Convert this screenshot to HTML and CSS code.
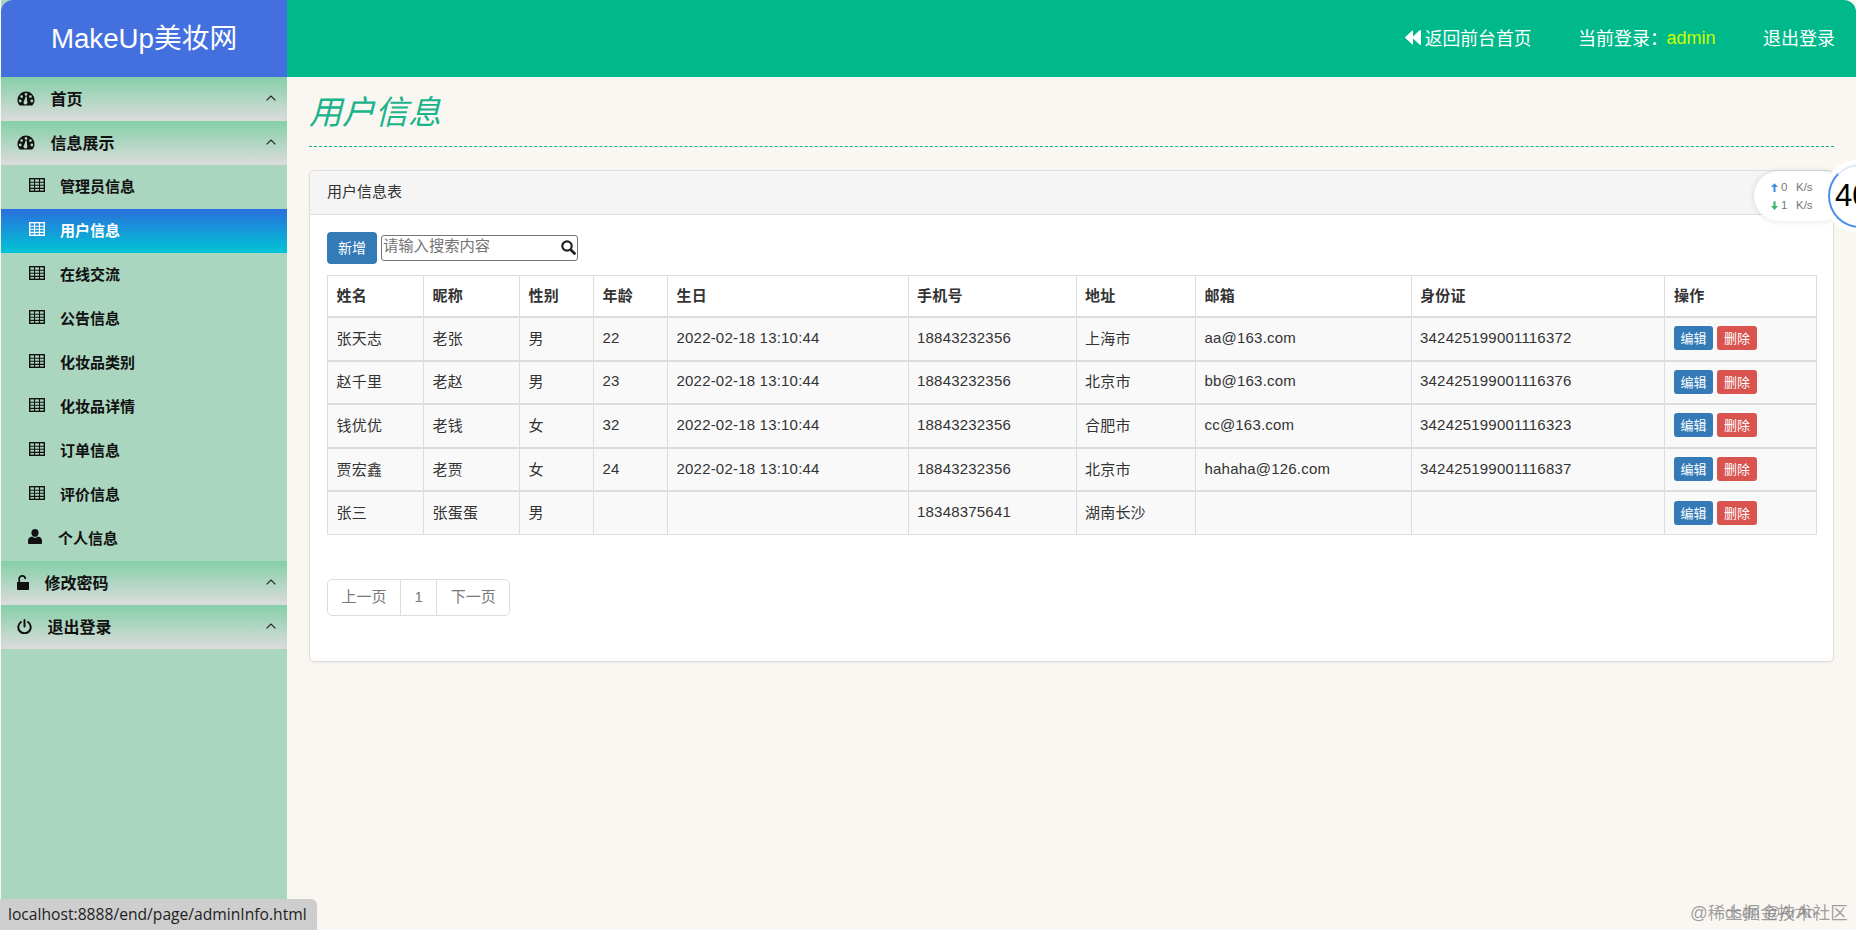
FILE: index.html
```html
<!DOCTYPE html>
<html lang="zh-CN">
<head>
<meta charset="UTF-8">
<meta name="viewport" content="width=device-width, initial-scale=1.0">
<title>MakeUp美妆网</title>
<link rel="stylesheet" href="styles.css">
</head>
<body>
  <!-- icon sprites -->
  <svg class="sprites" aria-hidden="true">
    <symbol id="i-dash" viewBox="0 0 17 15"><path fill="currentColor" fill-rule="evenodd" d="M8.5.5A8.5 8.5 0 0 0 0 9c0 2.3.8 4.1 2.2 5.5h12.6C16.2 13.1 17 11.3 17 9A8.5 8.5 0 0 0 8.5.5zM7.1 3.4a1.4 1.4 0 1 0 2.8 0 1.4 1.4 0 1 0-2.8 0zM2.7 5.6a1.4 1.4 0 1 0 2.8 0 1.4 1.4 0 1 0-2.8 0zM11.5 5.6a1.4 1.4 0 1 0 2.8 0 1.4 1.4 0 1 0-2.8 0zM1.3 10a1.4 1.4 0 1 0 2.8 0 1.4 1.4 0 1 0-2.8 0zM12.9 10a1.4 1.4 0 1 0 2.8 0 1.4 1.4 0 1 0-2.8 0zM8.2 5.5L6.6 10a2 2 0 1 0 3 .3L9.3 5.5z"/></symbol>
    <symbol id="i-th" viewBox="0 0 16 14"><g fill="none" stroke="currentColor"><rect x=".7" y=".7" width="14.6" height="12.6" stroke-width="1.400"/><path stroke-width="1.100" d="M.6 4.300h14.800M.6 7.300h14.800M.6 10.400h14.800M5.500.6v12.800M10.500.6v12.800"/></g></symbol>
    <symbol id="i-user" viewBox="0 0 14 15"><path fill="currentColor" d="M7 0a3.6 3.6 0 0 1 3.6 3.8C10.6 6 9.2 8 7 8S3.4 6 3.4 3.8A3.6 3.6 0 0 1 7 0zM4.2 7.6C5 8.4 6 8.9 7 8.9s2-.5 2.8-1.3c2.4.4 4.2 1.6 4.2 3.9V14c0 .6-.5 1-1 1H1c-.5 0-1-.4-1-1v-2.5c0-2.3 1.8-3.5 4.2-3.9z"/></symbol>
    <symbol id="i-lock" viewBox="0 0 12 15"><path fill="currentColor" d="M0 7h12v7c0 .6-.4 1-1 1H1c-.6 0-1-.4-1-1z"/><path fill="none" stroke="currentColor" stroke-width="1.7" d="M2.2 7V3.6C2.2 2 3.6.9 5.2.9s3 1.1 3 2.7V4"/></symbol>
    <symbol id="i-power" viewBox="0 0 15 15"><path fill="none" stroke="currentColor" stroke-width="2" stroke-linecap="round" d="M7.5 1v6.5M4 3A6.2 6.2 0 1 0 11 3"/></symbol>
    <symbol id="i-up" viewBox="0 0 10 6"><path fill="none" stroke="currentColor" stroke-width="1.2" d="M.6 5.4L5 1l4.4 4.4"/></symbol>
    <symbol id="i-back" viewBox="0 0 16 15"><path fill="currentColor" d="M8 0v6.5L15 0c.6 0 1 .4 1 1v13c0 .6-.4 1-1 1L8 8.5V15L.5 8.3c-.5-.4-.5-1.200 0-1.600z"/></symbol>
    <symbol id="i-search" viewBox="0 0 15 15"><circle cx="6" cy="6" r="4.7" fill="none" stroke="currentColor" stroke-width="2.200"/><path stroke="currentColor" stroke-width="2.800" stroke-linecap="round" d="M9.800 9.800l3.700 3.700"/></symbol>
    <symbol id="i-arrow" viewBox="0 0 8 10"><path fill="currentColor" d="M4 0l4 4.500H5.200V10H2.800V4.500H0z"/></symbol>
  </svg>

  <div class="app">
    <aside class="sidebar">
      <div class="logo">MakeUp美妆网</div>
      <nav class="menu">
        <a class="menu-group"><svg class="ic ic-dash"><use href="#i-dash"/></svg>首页<svg class="chevron"><use href="#i-up"/></svg></a>
        <a class="menu-group"><svg class="ic ic-dash"><use href="#i-dash"/></svg>信息展示<svg class="chevron"><use href="#i-up"/></svg></a>
        <a class="menu-item"><svg class="ic ic-th"><use href="#i-th"/></svg>管理员信息</a>
        <a class="menu-item active"><svg class="ic ic-th"><use href="#i-th"/></svg>用户信息</a>
        <a class="menu-item"><svg class="ic ic-th"><use href="#i-th"/></svg>在线交流</a>
        <a class="menu-item"><svg class="ic ic-th"><use href="#i-th"/></svg>公告信息</a>
        <a class="menu-item"><svg class="ic ic-th"><use href="#i-th"/></svg>化妆品类别</a>
        <a class="menu-item"><svg class="ic ic-th"><use href="#i-th"/></svg>化妆品详情</a>
        <a class="menu-item"><svg class="ic ic-th"><use href="#i-th"/></svg>订单信息</a>
        <a class="menu-item"><svg class="ic ic-th"><use href="#i-th"/></svg>评价信息</a>
        <a class="menu-item person"><svg class="ic ic-user"><use href="#i-user"/></svg>个人信息</a>
        <a class="menu-group"><svg class="ic ic-lock"><use href="#i-lock"/></svg>修改密码<svg class="chevron"><use href="#i-up"/></svg></a>
        <a class="menu-group"><svg class="ic ic-power"><use href="#i-power"/></svg>退出登录<svg class="chevron"><use href="#i-up"/></svg></a>
      </nav>
    </aside>

    <div class="right">
      <header class="topbar">
        <a class="top-link back"><svg class="ic-back"><use href="#i-back"/></svg>返回前台首页</a>
        <span class="top-link">当前登录：<b class="admin">admin</b></span>
        <a class="top-link">退出登录</a>
      </header>

      <main class="content">
        <h1 class="page-title">用户信息</h1>
        <section class="panel">
          <div class="panel-head">用户信息表</div>
          <div class="panel-body">
            <div class="toolbar">
              <button class="btn btn-add">新增</button>
              <div class="search">
                <input type="text" placeholder="请输入搜索内容">
                <svg class="ic-search"><use href="#i-search"/></svg>
              </div>
            </div>

            <table class="data-table">
              <colgroup>
                <col class="c1"><col class="c2"><col class="c3"><col class="c4"><col class="c5">
                <col class="c6"><col class="c7"><col class="c8"><col class="c9"><col class="c10">
              </colgroup>
              <thead>
                <tr><th>姓名</th><th>昵称</th><th>性别</th><th>年龄</th><th>生日</th><th>手机号</th><th>地址</th><th>邮箱</th><th>身份证</th><th>操作</th></tr>
              </thead>
              <tbody>
                <tr><td>张天志</td><td>老张</td><td>男</td><td>22</td><td>2022-02-18 13:10:44</td><td>18843232356</td><td>上海市</td><td>aa@163.com</td><td>342425199001116372</td><td><button class="btn btn-sm btn-edit">编辑</button><button class="btn btn-sm btn-del">删除</button></td></tr>
                <tr><td>赵千里</td><td>老赵</td><td>男</td><td>23</td><td>2022-02-18 13:10:44</td><td>18843232356</td><td>北京市</td><td>bb@163.com</td><td>342425199001116376</td><td><button class="btn btn-sm btn-edit">编辑</button><button class="btn btn-sm btn-del">删除</button></td></tr>
                <tr><td>钱优优</td><td>老钱</td><td>女</td><td>32</td><td>2022-02-18 13:10:44</td><td>18843232356</td><td>合肥市</td><td>cc@163.com</td><td>342425199001116323</td><td><button class="btn btn-sm btn-edit">编辑</button><button class="btn btn-sm btn-del">删除</button></td></tr>
                <tr><td>贾宏鑫</td><td>老贾</td><td>女</td><td>24</td><td>2022-02-18 13:10:44</td><td>18843232356</td><td>北京市</td><td>hahaha@126.com</td><td>342425199001116837</td><td><button class="btn btn-sm btn-edit">编辑</button><button class="btn btn-sm btn-del">删除</button></td></tr>
                <tr><td>张三</td><td>张蛋蛋</td><td>男</td><td></td><td></td><td>18348375641</td><td>湖南长沙</td><td></td><td></td><td><button class="btn btn-sm btn-edit">编辑</button><button class="btn btn-sm btn-del">删除</button></td></tr>
              </tbody>
            </table>

            <ul class="pagination">
              <li>上一页</li>
              <li>1</li>
              <li>下一页</li>
            </ul>
          </div>
        </section>
      </main>
    </div>
  </div>

  <!-- things lying over the page -->
  <div class="speed">
    <div class="speed-row"><svg class="arrow up"><use href="#i-arrow"/></svg><span class="num">0</span><span>K/s</span></div>
    <div class="speed-row"><svg class="arrow down"><use href="#i-arrow"/></svg><span class="num">1</span><span>K/s</span></div>
  </div>
  <div class="speed-ball">40</div>
  <div class="statusbar">localhost:8888/end/page/adminInfo.html</div>
  <div class="watermark">@稀土掘金技术社区</div>
  <div class="watermark second">dsdn @ArAn</div>
</body>
</html>
```

FILE: styles.css
```css
/* layout */
html, body {
  height: 100%;
}
body {
  margin: 0;
  overflow: hidden;
  position: relative;
  background-color: #faf7f3;
  color: #333;
  font-family: "Liberation Sans", "Noto Sans CJK SC", sans-serif;
  font-size: 15px;
}
.sprites {
  display: none;
}
.app {
  display: flex;
  height: 930px;
  padding-left: 1px;
  box-sizing: border-box;
  background-color: #faf7f3;
}

/* sidebar */
.sidebar {
  width: 286px;
  flex: none;
  background-color: #aad5bf;
  display: flex;
  flex-direction: column;
}
.logo {
  height: 77px;
  line-height: 77px;
  text-align: center;
  color: #fff;
  font-size: 27.700px;
  background-color: #4470df;
  border-top-left-radius: 12px;
}
.menu a {
  display: flex;
  align-items: center;
  height: 44px;
  box-sizing: border-box;
  color: #111;
  font-weight: bold;
}
.menu-group {
  position: relative;
  gap: 15.500px;
  padding-left: 16px;
  padding-bottom: 2px;
  font-size: 16px;
  background: linear-gradient(#84cfa9, #dcdcdc);
}
.menu-item {
  gap: 15px;
  padding-left: 28px;
  padding-bottom: 4px;
  font-size: 15px;
}
.menu-item.person {
  gap: 16px;
  padding-left: 27px;
}
.menu-item.active {
  color: #fff;
  background: linear-gradient(#2a6fdc, #00c5d5);
}
.ic {
  flex: none;
}
.ic-dash {
  width: 18px;
  height: 15px;
}
.ic-th {
  width: 16px;
  height: 14px;
}
.ic-user {
  width: 14px;
  height: 15px;
  margin-top: -1px;
}
.ic-lock {
  width: 12px;
  height: 15px;
}
.ic-power {
  width: 15px;
  height: 15px;
}
.chevron {
  position: absolute;
  left: 265px;
  top: 18px;
  width: 10px;
  height: 6px;
  color: #222;
}

/* top bar */
.right {
  flex: 1;
  min-width: 0;
}
.topbar {
  height: 77px;
  box-sizing: border-box;
  padding-right: 21px;
  padding-bottom: 3px;
  display: flex;
  justify-content: flex-end;
  align-items: center;
  gap: 47.500px;
  background-color: #00b98b;
  border-top-right-radius: 12px;
  color: #fff;
  font-size: 18px;
}
.top-link {
  display: flex;
  align-items: center;
}
.back {
  font-size: 17.800px;
  margin-right: -1px;
}
.ic-back {
  width: 16px;
  height: 15px;
  margin-right: 4px;
}
.admin {
  margin-left: -1.500px;
  padding-top: 3px;
  font-weight: normal;
  color: #ccff00;
}

/* content */
.content {
  padding: 0 22px;
}
.page-title {
  margin: 0;
  height: 69px;
  line-height: 72px;
  border-bottom: 1px dashed #12b88a;
  color: #1ab38a;
  font-size: 33px;
  font-style: italic;
  font-weight: normal;
}
.panel {
  margin-top: 23px;
  height: 492px;
  box-sizing: border-box;
  background-color: #fff;
  border: 1px solid #ddd;
  border-radius: 5px;
  box-shadow: 0 1px 2px rgba(0, 0, 0, 0.05);
}
.panel-head {
  height: 44px;
  line-height: 41px;
  box-sizing: border-box;
  padding-left: 17px;
  background-color: #f5f5f5;
  border-bottom: 1px solid #ddd;
  border-radius: 5px 5px 0 0;
}
.panel-body {
  padding: 17px 16px 0 17px;
}
.toolbar {
  display: flex;
  align-items: center;
  gap: 4px;
  margin-bottom: 11px;
}
.btn {
  border: 0;
  color: #fff;
  font-family: inherit;
  cursor: pointer;
}
.btn-add {
  width: 50px;
  height: 32px;
  font-size: 14px;
  background-color: #337ab7;
  border-radius: 4px;
  padding: 0 0 2px;
}
.search {
  position: relative;
  height: 26px;
}
.search input {
  width: 197px;
  height: 26px;
  box-sizing: border-box;
  padding: 0 1px 5px;
  border: 1px solid #767676;
  border-radius: 3px;
  font-family: inherit;
  font-size: 15.300px;
}
.search input::placeholder {
  color: #757575;
}
.ic-search {
  position: absolute;
  right: 2px;
  top: 5px;
  width: 15px;
  height: 15px;
  color: #222;
}

/* table */
.data-table {
  width: 1489px;
  table-layout: fixed;
  border-collapse: collapse;
}
.c1, .c2 { width: 96px; }
.c3, .c4 { width: 74px; }
.c5 { width: 240.500px; }
.c6 { width: 168px; }
.c7 { width: 119.500px; }
.c8 { width: 215.500px; }
.c9 { width: 253px; }
.c10 { width: 152.500px; }
.data-table th,
.data-table td {
  border: 1px solid #ddd;
  padding: 0 8.500px 3px;
  text-align: left;
  letter-spacing: 0.2px;
}
.data-table th {
  height: 37px;
  border-bottom-width: 2px;
  font-size: 15px;
}
.data-table td {
  height: 38.600px;
  background-color: #f9f9f9;
  border-top-width: 2px;
}
.data-table th:last-child,
.data-table td:last-child {
  padding-left: 9.500px;
}
.btn-sm {
  width: 39px;
  height: 24px;
  margin-top: 2px;
  padding: 0 0 1px;
  font-size: 13px;
  border-radius: 3px;
  vertical-align: middle;
}
.btn-edit {
  background-color: #337ab7;
}
.btn-del {
  width: 40px;
  margin-left: 4px;
  background-color: #d9534f;
}

/* pagination */
.pagination {
  display: flex;
  width: max-content;
  margin: 44px 0 0;
  padding: 0;
  list-style: none;
  color: #777;
}
.pagination li {
  height: 37px;
  line-height: 33px;
  box-sizing: border-box;
  padding: 0 13.500px;
  border: 1px solid #ddd;
  margin-left: -1px;
}
.pagination li:first-child {
  margin-left: 0;
  border-radius: 5px 0 0 5px;
}
.pagination li:last-child {
  border-radius: 0 5px 5px 0;
}

/* net speed widget */
.speed {
  position: absolute;
  left: 1754px;
  top: 171px;
  width: 92px;
  height: 50px;
  box-sizing: border-box;
  padding: 7px 0 0 17px;
  background-color: #fff;
  border-radius: 25px;
  box-shadow: 0 0 6px rgba(0, 0, 0, 0.12);
  font-size: 11.500px;
  color: #777;
}
.speed-row {
  display: flex;
  align-items: center;
  height: 18px;
}
.arrow {
  width: 7px;
  height: 9px;
  margin-right: 3px;
}
.arrow.up {
  color: #3d8fe0;
}
.arrow.down {
  color: #3bb56c;
  transform: rotate(180deg);
}
.num {
  width: 15px;
}
.speed-ball {
  position: absolute;
  left: 1828px;
  top: 164px;
  width: 64px;
  height: 64px;
  box-sizing: border-box;
  padding-left: 5px;
  line-height: 60px;
  background-color: #fff;
  border: 2px solid #4a90e8;
  border-top-color: #dfe9f7;
  border-radius: 50%;
  box-shadow: 0 0 0 5px #fff;
  color: #000;
  font-size: 31px;
}

/* browser status bar */
.statusbar {
  position: absolute;
  left: 0;
  bottom: 0;
  width: 317px;
  height: 31px;
  box-sizing: border-box;
  padding-left: 8px;
  line-height: 30px;
  background-color: #cecece;
  border-top-right-radius: 6px;
  color: #222;
  font-family: "Open Sans", sans-serif;
  font-size: 15.650px;
  white-space: nowrap;
}
.watermark {
  position: absolute;
  left: 1690px;
  top: 899px;
  color: rgba(120, 120, 120, 0.7);
  font-size: 17.500px;
  white-space: nowrap;
}
.watermark.second {
  left: 1725px;
  top: 904px;
  font-size: 16px;
}
```
